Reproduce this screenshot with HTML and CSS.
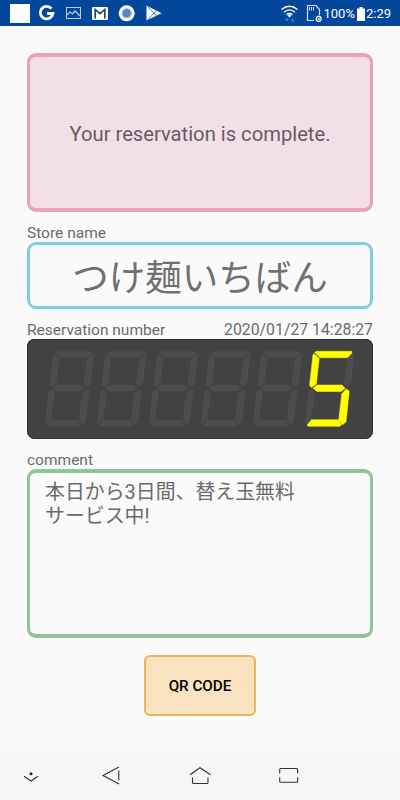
FILE: index.html
```html
<!DOCTYPE html>
<html lang="ja">
<head>
    <meta charset="UTF-8">
    <meta name="viewport" content="width=device-width, initial-scale=1.0">
    <title>Reservation</title>
    <link rel="stylesheet" href="styles.css">
</head>
<body>

<div class="status-bar">
    <svg class="status-left" width="170" height="26" viewBox="0 0 170 26">
        <rect x="10" y="4" width="20" height="19" fill="#fff"/>
        <path d="M51.500 8.600A6.300 6.300 0 1 0 52.900 13.500H47" fill="none" stroke="#fff" stroke-width="2.800"/>
        <!-- picture -->
        <rect x="66.5" y="7.5" width="14" height="11" fill="none" stroke="#b9cce4"/>
        <path d="M67 15l3-3 2.5 2 2.5-3 5 5" fill="none" stroke="#b9cce4" stroke-width="1.2"/>
        <!-- mail -->
        <rect x="92" y="7" width="16" height="13" rx="1.2" fill="#fff"/>
        <path d="M95.200 18.500V9.500l4.800 4.200 4.800-4.200v9" fill="none" stroke="#174077" stroke-width="1.600"/>
        <circle cx="126.700" cy="13.300" r="8" fill="#fff"/>
        <circle cx="126.700" cy="13.300" r="4.600" fill="#5686c2" stroke="#a1bee0" stroke-width="1.300"/>
        <!-- play store -->
        <path d="M146.500 5.500L161.500 13.200 146.500 20.500z" fill="#fff"/>
        <path d="M147.500 6.500l9 9.500M147.500 20l9-9.500" stroke="#174f96" stroke-width=".8"/>
    </svg>
    <div class="status-right">
        <svg width="44" height="26" viewBox="278 0 44 26">
            <g fill="none" stroke="#fff" stroke-width="1.300">
                <path d="M280.500 9.500Q288.500 3 296.500 9.500M283 12.200Q288.500 7.500 294 12.200M285.400 14.600Q288.500 12 291.600 14.600"/>
            </g>
            <path d="M286.300 15.200Q288.500 13.500 290.700 15.200L288.500 17.600z" fill="#fff"/>
            <path d="M284 18.500h4l-2 3zM289.500 21.500h4l-2-3z" fill="#5581b8"/>
            <path d="M313 20.500h-6.500V5.500h8.500l3.500 4v6" fill="none" stroke="#d5e1f0" stroke-width="1.200"/>
            <path d="M308.500 7v3.500M310.500 7v3.500M312.500 7v3.500" stroke="#d5e1f0"/>
            <circle cx="317.700" cy="18.800" r="2.500" fill="#024799" stroke="#fff" stroke-width="1.200"/>
            <path d="M316.500 17.600l2.400 2.400M318.900 17.600l-2.400 2.400" stroke="#fff" stroke-width=".9"/>
        </svg>
        <span>100%</span>
        <svg class="battery" width="8" height="14" viewBox="0 0 8 14">
            <path d="M2.500 0h3v1.500H8V14H0V1.500h2.500z" fill="#fff"/>
        </svg>
        <span>2:29</span>
    </div>
</div>

<div class="container">
    <div class="box message">Your reservation is complete.</div>

    <div class="label">Store name</div>
    <div class="box store">つけ麺いちばん</div>

    <div class="label number-label">
        <span>Reservation number</span>
        <span class="date">2020/01/27 14:28:27</span>
    </div>
    <div class="led">
        <svg width="346" height="100" viewBox="0 0 346 100">
            <defs>
                <path id="a" d="M10 0.300H45.500L46 2 41.500 6.700H14L8.700 1.500z"/>
                <path id="b" d="M47 2.300L48.300 4 44.800 33.500 41 36.300 37.800 33 41.200 8z"/>
                <path id="c" d="M40.200 38L43.300 40 40 71 36.500 73.800 32.700 69.300 35.700 43z"/>
                <path id="d" d="M5.500 68.700H32L35.500 73.700 34 75.300H2L1 74z"/>
                <path id="e" d="M5.700 38.300L9 42 5.500 68 0.600 73 -1 71.500 2.500 40.500z"/>
                <path id="f" d="M8 2.700L13.200 7.500 10.300 33 5.700 36.500 3.500 34.500 7 3.500z"/>
                <path id="g" d="M7 37.300L11 34H36L39.300 37.300 35 40.500H11z"/>
                <g id="digit">
                    <use href="#a"/><use href="#b"/><use href="#c"/><use href="#d"/>
                    <use href="#e"/><use href="#f"/><use href="#g"/>
                </g>
            </defs>
            <g class="off">
                <use href="#digit" x="19" y="12"/>
                <use href="#digit" x="71" y="12"/>
                <use href="#digit" x="123" y="12"/>
                <use href="#digit" x="175" y="12"/>
                <use href="#digit" x="227" y="12"/>
                <use href="#digit" x="279" y="12"/>
            </g>
            <!-- 5 -->
            <g class="on" transform="translate(279 12)">
                <use href="#a"/><use href="#f"/><use href="#g"/><use href="#c"/><use href="#d"/>
            </g>
        </svg>
    </div>

    <div class="label comment-label">comment</div>
    <div class="box comment">本日から3日間、替え玉無料<br>サービス中!</div>

    <button class="qr">QR CODE</button>
</div>

<div class="nav-bar">
    <svg width="400" height="48" viewBox="0 752 400 48" fill="none" stroke="#333" stroke-width="1.100">
        <circle cx="31" cy="773.700" r="1.500" fill="#222" stroke="none"/>
        <path d="M24 776.300l7 4.700 7-4.700"/>
        <path d="M119 767l-16 8.500 16 8.500M118.800 770.500v10"/>
        <path d="M190 774.700l10-7 10.500 7M192.500 777.500v5q0 1 1 1h13.500q1 0 1-1v-5"/>
        <path d="M279.700 773.500v-4q0-1 1-1h16q1 0 1 1v4M279.700 777.300v4q0 1 1 1h16q1 0 1-1v-4"/>
    </svg>
</div>

</body>
</html>
```
FILE: styles.css
```css
body {
    margin: 0;
    height: 800px;
    display: flex;
    flex-direction: column;
    background-color: #fafafa;
    color: #6a6a6a;
    font-family: Roboto, "Noto Sans CJK JP", sans-serif;
    overflow: hidden;
}
.status-bar {
    display: flex;
    justify-content: space-between;
    height: 26px;
    background-color: #024799;
}
.status-right {
    display: flex;
    align-items: center;
    padding-right: 9px;
    color: #ffffff;
    font-size: 13px;
    line-height: 26px;
}
.status-right span {
    padding-top: 2px;
}
.status-right .battery {
    margin: 1px 1px 0 2px;
}
.container {
    flex: 1;
    display: flex;
    flex-direction: column;
    padding: 27px 27px 0;
}
.box {
    box-sizing: border-box;
    border: 3px solid;
    border-radius: 9px;
}
.message {
    display: flex;
    align-items: center;
    justify-content: center;
    height: 159px;
    padding-top: 2px;
    border-width: 4px 3px;
    border-color: #eba0bf;
    background-color: #f3dfe8;
    color: #685c62;
    font-size: 20.200px;
}
.label {
    height: 19px;
    padding-top: 11px;
    font-size: 15.500px;
    line-height: 20px;
}
.store {
    display: flex;
    align-items: center;
    justify-content: center;
    height: 67px;
    border-color: #83c9e6;
    color: #707070;
    font-size: 36.500px;
}
.number-label {
    display: flex;
    justify-content: space-between;
}
.date {
    font-size: 15.800px;
}
.led {
    height: 100px;
    border-radius: 8px;
    background-color: #424242;
    box-shadow: inset 0 0 0 1px #303030, inset 0 1px 0 #111111;
}
.led svg {
    display: block;
}
.off {
    fill: #4d4d4d;
}
.on {
    fill: #ffff00;
    stroke: #ffff00;
    stroke-width: 0.500;
}
.comment {
    height: 169px;
    padding: 8px 15px;
    border-width: 4px 3px;
    border-color: #8bc69a;
    font-size: 19.900px;
    line-height: 24px;
}
.qr {
    align-self: center;
    width: 112px;
    height: 61px;
    margin-top: 17px;
    border: 2px solid #eab45c;
    border-radius: 6px;
    background-color: #fae2c0;
    color: #000000;
    font-family: Roboto, sans-serif;
    font-size: 15.200px;
    font-weight: 500;
}
.nav-bar {
    height: 48px;
    background-color: #f6f6f6;
}
```
